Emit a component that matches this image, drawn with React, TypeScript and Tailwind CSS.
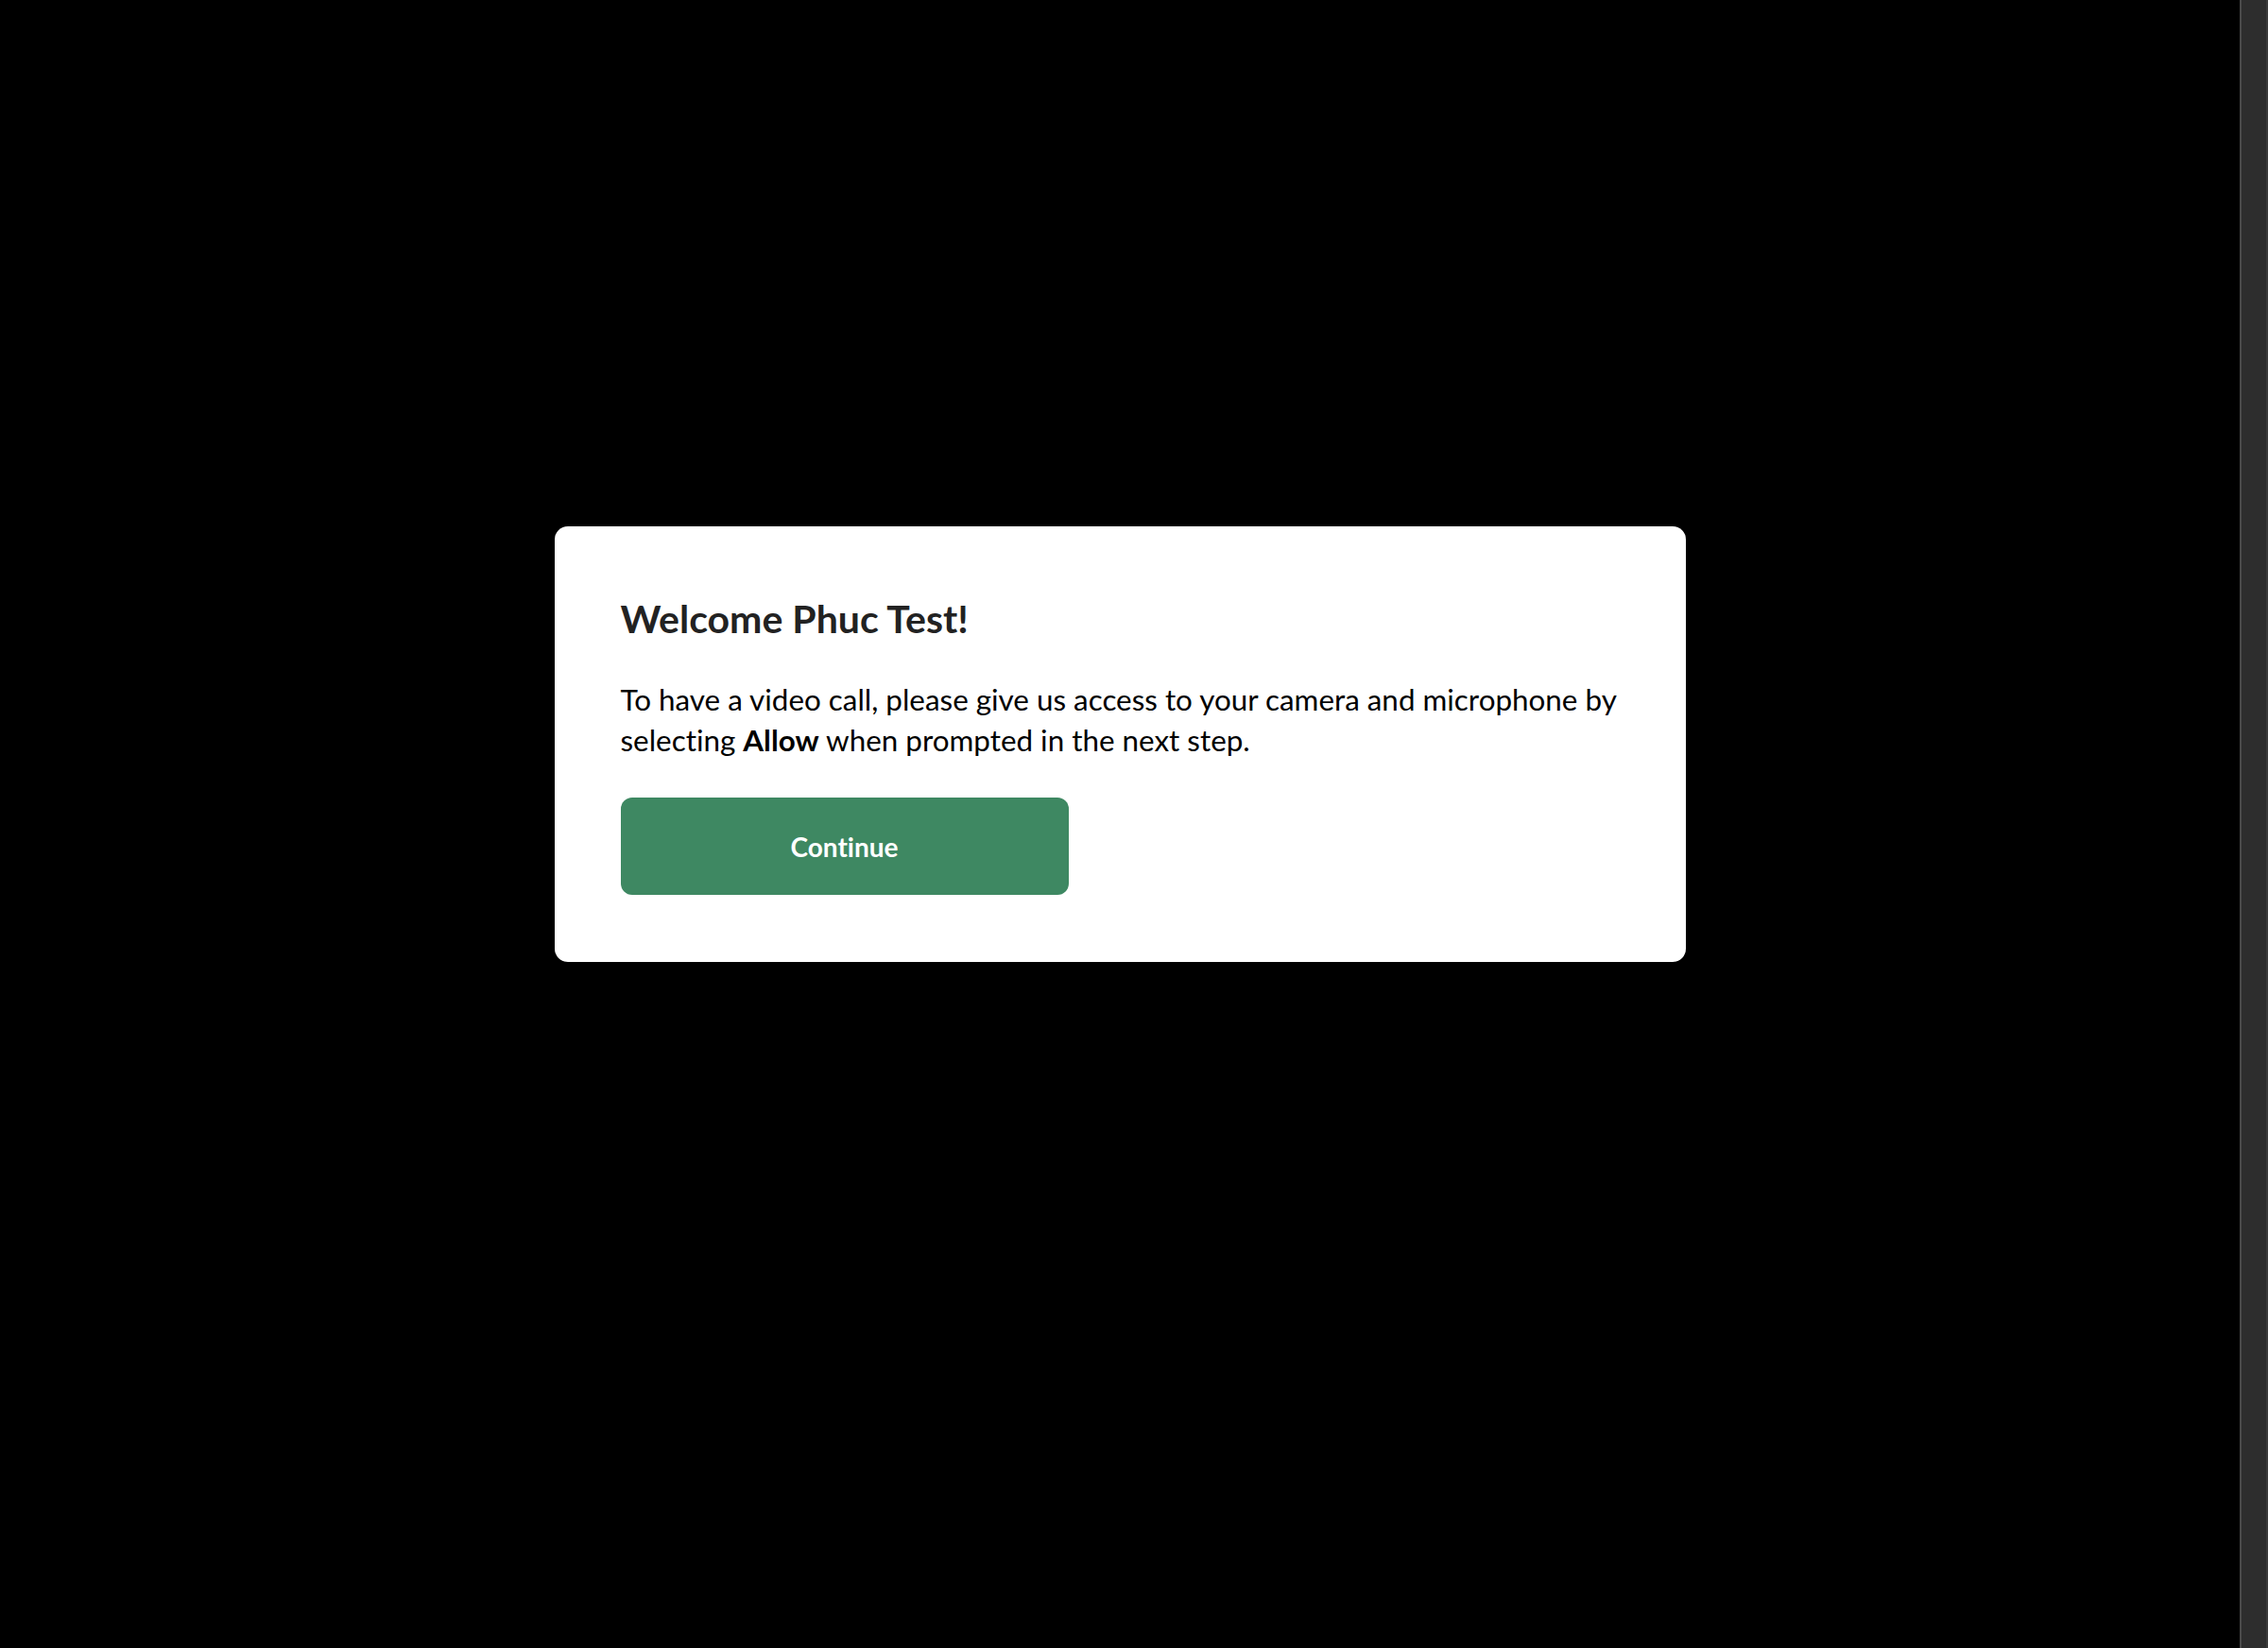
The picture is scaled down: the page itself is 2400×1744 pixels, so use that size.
import React from "react";

export default function App() {
  return (
    <div className="flex h-[1744px] w-full bg-black [font-variant-ligatures:none]" style={{ fontFamily: "Lato, 'Open Sans', sans-serif" }}>
      <div className="flex flex-1 justify-center pt-[557px]">
        <div className="h-[461px] w-[1197px] rounded-[14px] bg-white px-[70px] pt-[70px]">
          <h1 className="text-[41px] font-bold leading-[56px] text-[#222222]">Welcome Phuc Test!</h1>
          <p className="mt-[36px] text-[31.4px] leading-[43px] text-black">
            To have a video call, please give us access to your camera and microphone by selecting <strong className="font-bold">Allow</strong> when prompted in the next step.
          </p>
          <button className="mt-[39px] flex h-[103px] w-[474px] items-center justify-center rounded-[12px] bg-[#3e8862] text-[28px] font-bold text-white">
            Continue
          </button>
        </div>
      </div>
      <div className="h-full w-[30px] border-l-2 border-r-2 border-l-[#4a4a4a] border-r-[#3a3a3a] bg-[#2d2d2d]" />
    </div>
  );
}
